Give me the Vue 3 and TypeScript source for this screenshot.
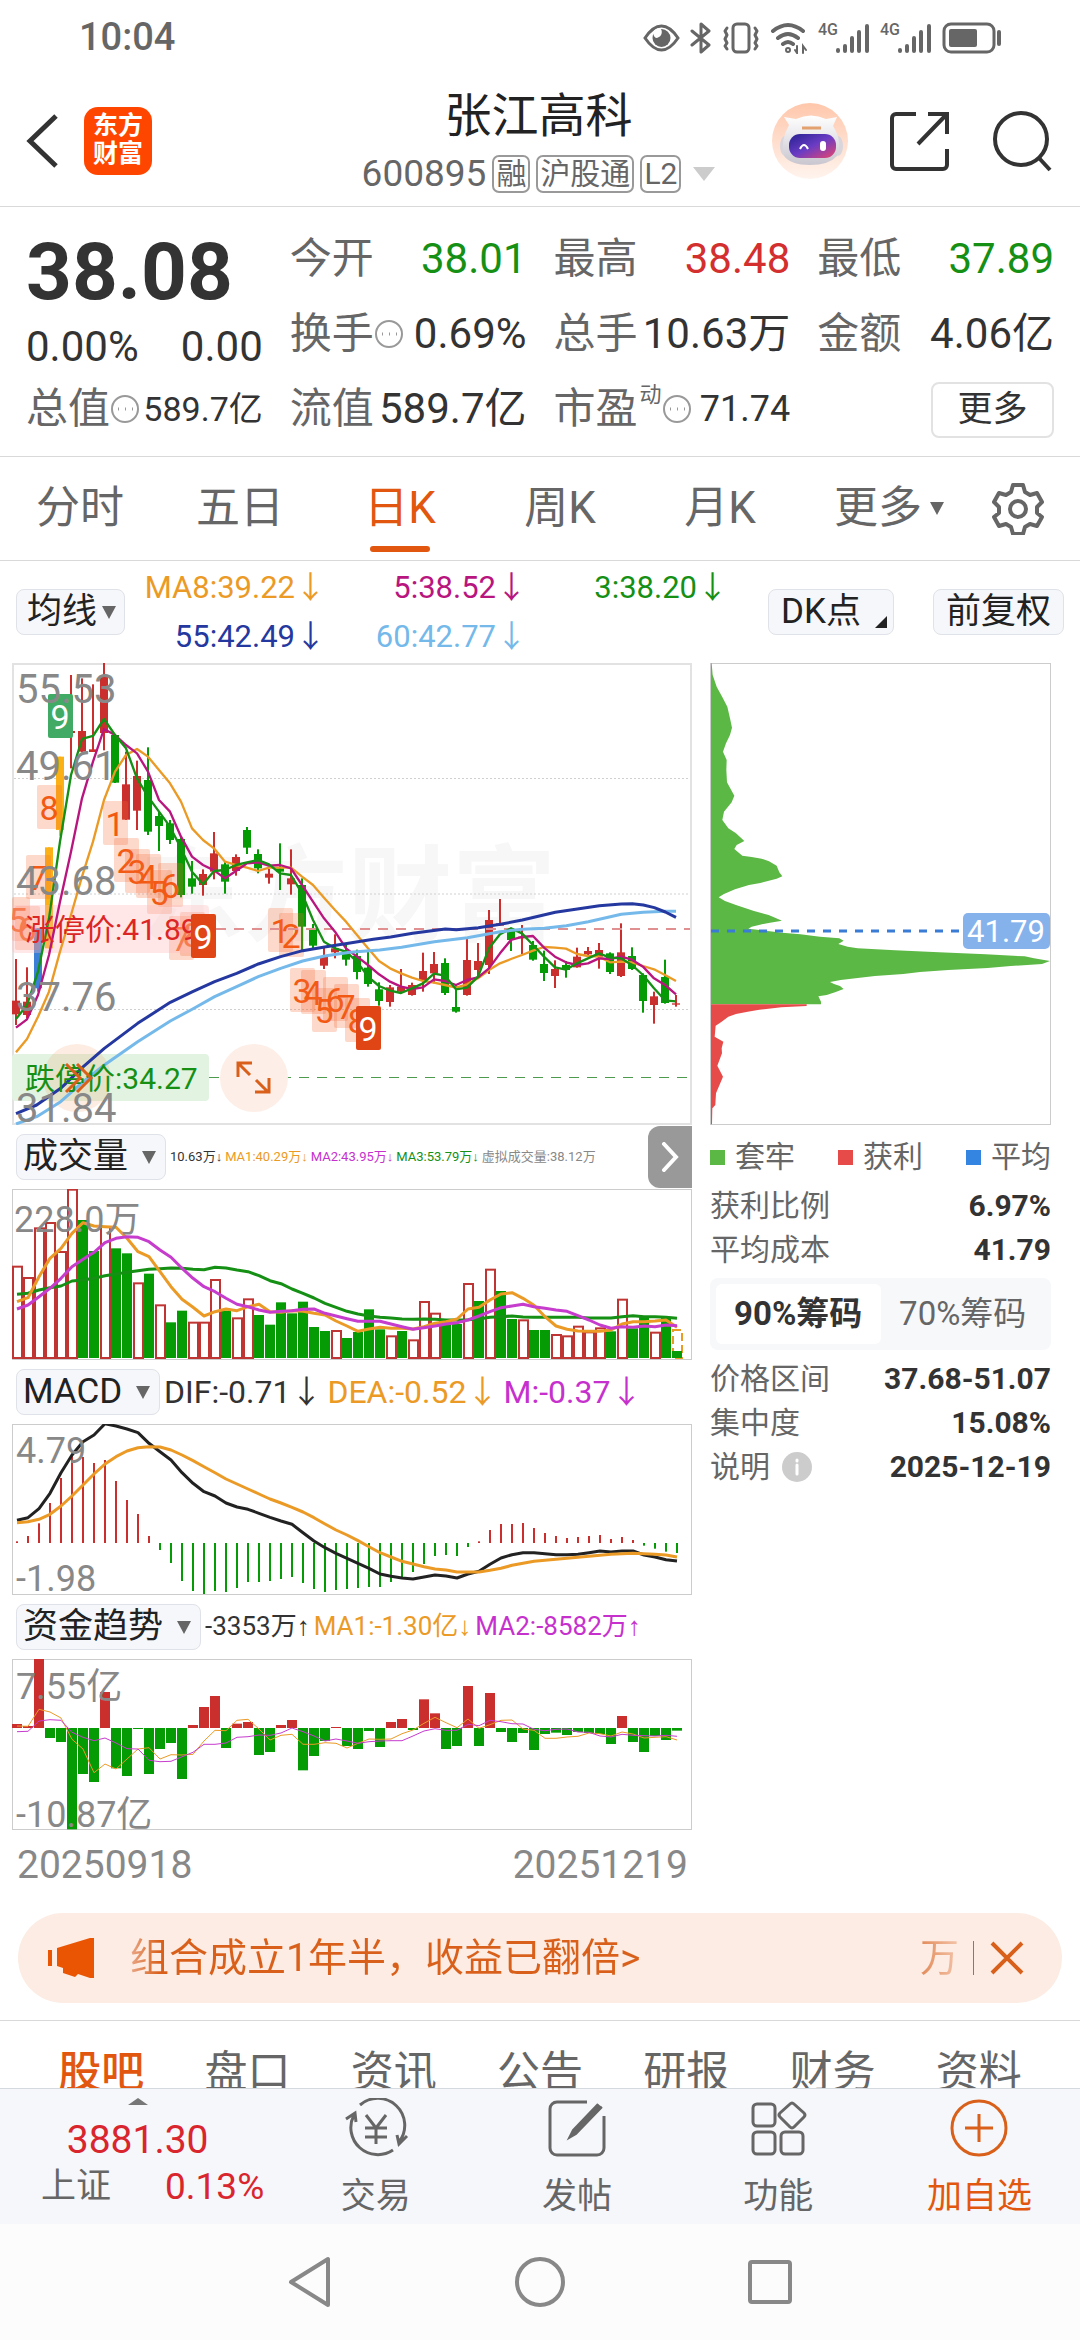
<script setup lang="ts">
import { ref } from 'vue'

type Pt = [number, number]

const period = ref('日K')
const periods = ['分时', '五日', '日K', '周K', '月K']
const chip = ref('90%')
const section = ref('股吧')
const sections = ['股吧', '盘口', '资讯', '公告', '研报', '财务', '资料']

const averages = [
  { text: 'MA8:39.22', color: '#eb9a26' },
  { text: '5:38.52', color: '#b9157f' },
  { text: '3:38.20', color: '#159015' },
  { text: '55:42.49', color: '#2438a0' },
  { text: '60:42.77', color: '#74b9ea' },
]

const RED = '#cb2f2d'
const GREEN = '#049b04'

/* Price chart: units are thirds of a pixel. high, open/close top, bottom, low, colour */
const candleRows: [number, number, number, number, string][] = [
  [912, 1037, 1078, 1110, 'r'], [937, 1040, 1080, 1090, 'r'], [820, 820, 1000, 1010, 'b'],
  [577, 577, 880, 880, 'y'], [305, 305, 525, 542, 'y'], [60, 228, 234, 340, 'r'],
  [70, 228, 290, 292, 'r'], [88, 283, 291, 291, 'r'], [24, 60, 234, 286, 'r'],
  [238, 240, 383, 384, 'g'], [290, 388, 494, 495, 'r'], [317, 363, 467, 525, 'r'],
  [277, 375, 530, 540, 'g'], [468, 483, 513, 588, 'g'], [495, 505, 555, 567, 'g'],
  [545, 552, 720, 727, 'g'], [618, 670, 695, 716, 'g'], [643, 657, 690, 722, 'r'],
  [531, 595, 650, 673, 'r'], [620, 628, 680, 716, 'g'], [598, 606, 648, 662, 'r'],
  [516, 525, 578, 597, 'g'], [583, 597, 640, 655, 'g'], [642, 656, 668, 686, 'r'],
  [565, 640, 650, 705, 'g'], [583, 670, 688, 719, 'r'], [670, 690, 815, 885, 'g'],
  [807, 820, 872, 885, 'g'], [873, 905, 932, 942, 'r'], [838, 880, 892, 910, 'r'],
  [865, 890, 914, 932, 'g'], [884, 903, 951, 973, 'g'], [890, 938, 987, 995, 'g'],
  [982, 1003, 1038, 1052, 'g'], [990, 997, 1041, 1055, 'r'], [942, 995, 1010, 1015, 'r'],
  [983, 990, 1020, 1022, 'r'], [893, 948, 975, 1010, 'r'], [891, 927, 955, 985, 'r'],
  [910, 924, 1014, 1020, 'g'], [990, 1056, 1070, 1073, 'g'], [850, 915, 1020, 1022, 'r'],
  [864, 918, 945, 965, 'r'], [765, 795, 930, 957, 'r'], [732, 805, 812, 812, 'r'],
  [818, 828, 855, 888, 'g'], [810, 845, 850, 897, 'r'], [858, 870, 914, 917, 'g'],
  [887, 927, 954, 978, 'g'], [916, 942, 963, 999, 'r'], [918, 930, 945, 968, 'g'],
  [878, 905, 937, 938, 'r'], [876, 888, 898, 905, 'r'], [864, 885, 905, 941, 'r'],
  [892, 895, 951, 957, 'g'], [805, 892, 963, 966, 'r'], [877, 903, 942, 945, 'g'],
  [955, 960, 1038, 1073, 'g'], [1010, 1024, 1050, 1106, 'r'], [914, 966, 1044, 1046, 'g'],
  [1020, 1045, 1049, 1055, 'r'],
]
const tint: Record<string, string> = { r: RED, g: GREEN, b: '#3b7fd6', y: '#fbb016' }
const candles = candleRows.map(([high, top, bottom, low, c], i) => ({
  x: 48 + 33 * i, high, top, h: bottom - top, low, fill: tint[c],
}))

const join = (pts: Pt[]) => pts.map((p) => p.join(',')).join(' ')
const everyBar = (ys: number[], x0: number, step: number) =>
  join(ys.map((y, i): Pt => [Math.round((x0 + step * i) * 10) / 10, y]))

const ma3 = everyBar([1092, 1050, 950, 790, 560, 360, 252, 243, 192, 240, 280, 370, 425, 470, 515, 580, 650, 688, 648, 645, 630, 622, 615, 628, 655, 660, 715, 795, 860, 880, 890, 920, 965, 993, 1007, 1014, 1000, 985, 956, 962, 1003, 998, 965, 880, 838, 820, 835, 870, 905, 937, 944, 925, 910, 895, 908, 910, 930, 960, 1000, 1036, 1039], 48, 33)
const ma5 = everyBar([1118, 1093, 1020, 900, 740, 590, 430, 320, 222, 240, 270, 295, 350, 435, 470, 545, 605, 630, 646, 670, 648, 625, 622, 632, 630, 640, 690, 740, 790, 830, 880, 905, 930, 958, 980, 995, 1002, 997, 973, 978, 990, 975, 967, 940, 895, 855, 846, 843, 878, 905, 922, 930, 925, 910, 912, 905, 914, 935, 970, 990, 1018], 48, 33)
const ma8 = everyBar([1192, 1152, 1085, 1010, 890, 780, 665, 560, 435, 350, 300, 282, 305, 345, 385, 440, 520, 555, 580, 620, 630, 638, 648, 638, 638, 638, 665, 690, 728, 765, 800, 840, 880, 918, 940, 955, 968, 978, 983, 990, 998, 988, 970, 945, 925, 912, 900, 887, 876, 878, 881, 897, 903, 905, 922, 920, 922, 933, 943, 960, 978], 48, 33)
const ma55 = join([[48, 1376], [110, 1350], [182, 1300], [250, 1235], [313, 1180], [413, 1105], [511, 1042], [578, 1010], [644, 980], [710, 955], [775, 927], [842, 905], [908, 887], [974, 876], [1050, 864], [1120, 853], [1172, 846], [1238, 835], [1336, 822], [1369, 824], [1435, 818], [1501, 808], [1567, 795], [1666, 772], [1732, 762], [1798, 752], [1864, 747], [1897, 746], [1930, 750], [1963, 758], [1996, 771], [2028, 787]])
const ma60 = join([[48, 1407], [110, 1385], [182, 1340], [250, 1280], [313, 1230], [413, 1160], [511, 1098], [578, 1062], [644, 1025], [710, 995], [775, 965], [842, 940], [908, 918], [974, 903], [1050, 892], [1139, 885], [1205, 877], [1303, 860], [1402, 848], [1501, 830], [1567, 823], [1633, 820], [1699, 812], [1765, 800], [1864, 778], [1930, 772], [1996, 769], [2028, 769]])

/* Sequence markers: text, centre x, top y, in pixels of the price chart */
const marks: [string, number, number, string][] = [
  ['8', 37, 122, ''], ['7', 26, 192, ''], ['5', 6, 234, ''], ['6', 15, 243, ''],
  ['1', 103, 138, ''], ['2', 114, 175, ''], ['3', 125, 186, ''], ['4', 136, 191, ''],
  ['5', 147, 207, ''], ['6', 158, 200, ''], ['7', 169, 253, ''], ['8', 180, 249, ''],
  ['1', 268, 245, ''], ['2', 279, 250, ''], ['3', 290, 305, ''], ['4', 301, 307, ''],
  ['5', 312, 325, ''], ['6', 323, 314, ''], ['7', 334, 321, ''], ['8', 345, 335, ''],
  ['9', 48, 31, '#41ab65'], ['9', 356, 343, '#e04516'],
]
const priceScale: [string, number][] = [
  ['55.53', 40], ['49.61', 117], ['43.68', 232], ['37.76', 348], ['31.84', 459],
]

/* Volume: bar top, R is a hollow rising day */
const volumeRows: [number, 'R' | 'G'][] = [
  [437, 'R'], [471, 'R'], [322, 'R'], [306, 'R'], [393, 'R'], [206, 'R'], [300, 'G'], [393, 'G'], [318, 'R'], [385, 'G'],
  [400, 'G'], [487, 'R'], [461, 'G'], [553, 'R'], [607, 'G'], [572, 'G'], [605, 'R'], [605, 'R'], [477, 'R'], [572, 'G'],
  [592, 'R'], [535, 'R'], [585, 'G'], [614, 'G'], [547, 'G'], [580, 'G'], [545, 'G'], [621, 'G'], [633, 'G'], [630, 'R'],
  [654, 'G'], [636, 'G'], [568, 'G'], [628, 'G'], [646, 'R'], [633, 'G'], [658, 'R'], [543, 'R'], [578, 'R'], [607, 'G'],
  [612, 'G'], [489, 'R'], [543, 'G'], [446, 'R'], [513, 'G'], [597, 'G'], [598, 'R'], [630, 'G'], [630, 'G'], [642, 'R'],
  [646, 'R'], [617, 'R'], [634, 'R'], [622, 'R'], [634, 'G'], [536, 'R'], [625, 'G'], [590, 'G'], [635, 'R'], [592, 'G'],
]
const barX = (i: number) => 5 + 11 * i
const third = (ys: number[], off: number) => ys.map((y) => Math.round((y / 3 - off) * 10) / 10)
const line = (ys: number[], off: number) => everyBar(third(ys, off), 5, 11)

const volumes = volumeRows.map(([top, c], i) => ({ x: barX(i), y: top / 3 - 69, up: c === 'R' }))
const vol1 = line([545, 533, 470, 415, 385, 340, 308, 318, 320, 322, 355, 395, 410, 455, 500, 538, 562, 588, 575, 567, 572, 560, 553, 575, 577, 572, 574, 580, 585, 603, 618, 634, 627, 622, 625, 625, 627, 620, 610, 605, 597, 567, 562, 540, 522, 518, 535, 556, 590, 618, 628, 633, 634, 634, 630, 612, 605, 605, 603, 600, 622], 69)
const vol2 = line([567, 555, 530, 505, 475, 440, 418, 397, 368, 355, 350, 352, 365, 390, 412, 445, 475, 500, 515, 535, 553, 560, 570, 577, 574, 572, 568, 567, 580, 588, 596, 604, 604, 604, 612, 620, 628, 623, 618, 612, 608, 600, 588, 575, 563, 558, 553, 560, 565, 570, 574, 587, 600, 615, 625, 620, 622, 618, 620, 615, 617], 69)
const vol3 = line([523, 520, 510, 503, 498, 483, 480, 475, 467, 462, 457, 452, 448, 446, 444, 445, 448, 449, 442, 444, 450, 455, 467, 482, 491, 507, 520, 534, 550, 562, 574, 582, 588, 592, 594, 597, 598, 597, 598, 600, 600, 599, 597, 592, 590, 588, 591, 592, 592, 592, 592, 592, 594, 594, 594, 590, 587, 590, 590, 592, 595], 69)

/* Bars that grow from a zero line, as a y span in pixels */
const zeroBars = (ys: number[], zero: number, off: number) =>
  ys.map((y, i) => ({
    x: barX(i),
    y: Math.min(y, zero) / 3 - off,
    h: Math.abs(y - zero) / 3,
    fill: y < zero ? RED : GREEN,
  }))
const macdBars = zeroBars([424, 408, 370, 309, 234, 165, 171, 189, 180, 243, 300, 342, 408, 450, 489, 543, 573, 582, 573, 576, 564, 546, 546, 543, 537, 531, 549, 567, 576, 570, 567, 564, 561, 561, 546, 533, 516, 492, 468, 465, 468, 441, 424, 390, 372, 372, 369, 384, 399, 408, 414, 411, 408, 405, 417, 411, 420, 437, 446, 455, 459], 429, 24)
const dif = line([361, 353, 326, 280, 218, 165, 125, 105, 71, 78, 87, 98, 130, 155, 180, 218, 250, 275, 288, 309, 321, 328, 340, 352, 363, 373, 398, 423, 443, 460, 475, 490, 505, 522, 529, 534, 537, 531, 525, 528, 534, 522, 514, 493, 474, 464, 458, 458, 461, 464, 464, 463, 458, 453, 456, 453, 453, 465, 471, 479, 483], 24)
const dea = line([368, 365, 358, 343, 318, 288, 255, 222, 192, 170, 153, 143, 140, 141, 150, 165, 182, 200, 218, 237, 252, 267, 282, 297, 309, 322, 336, 353, 372, 390, 405, 422, 440, 458, 471, 484, 492, 500, 507, 510, 516, 516, 516, 511, 505, 496, 490, 484, 481, 478, 475, 472, 469, 466, 463, 461, 460, 461, 463, 465, 471], 24)
const fundBars = zeroBars([252, 258, 54, 294, 306, 568, 402, 426, 156, 385, 408, 267, 402, 327, 309, 417, 255, 201, 168, 324, 251, 246, 345, 336, 255, 240, 391, 348, 303, 261, 318, 327, 273, 321, 246, 237, 270, 178, 220, 327, 318, 138, 318, 159, 276, 306, 279, 330, 282, 278, 285, 276, 279, 282, 312, 228, 306, 336, 288, 300, 272], 264, 19)
const fund1 = line([258, 259, 208, 216, 234, 298, 327, 398, 372, 387, 357, 327, 323, 357, 344, 345, 343, 303, 271, 272, 241, 238, 267, 300, 286, 283, 313, 313, 308, 310, 324, 310, 297, 298, 297, 281, 270, 250, 232, 248, 263, 237, 265, 254, 241, 240, 267, 271, 295, 295, 291, 289, 279, 281, 288, 276, 282, 294, 292, 290, 300], 19)
const fund2 = line([275, 274, 243, 239, 241, 277, 292, 302, 294, 309, 326, 327, 361, 365, 364, 350, 337, 313, 313, 309, 292, 290, 285, 286, 279, 264, 275, 288, 303, 297, 303, 310, 305, 303, 302, 302, 288, 273, 266, 271, 271, 253, 257, 241, 245, 251, 252, 268, 272, 268, 267, 276, 277, 288, 291, 283, 286, 287, 288, 286, 289], 19)

/* Chip distribution outlines, thirds of a pixel */
const trapped = join([[33, 25], [35, 25], [38, 60], [50, 95], [68, 128], [82, 155], [90, 190], [96, 218], [90, 240], [78, 265], [69, 290], [80, 315], [79, 345], [81, 382], [92, 402], [103, 422], [95, 442], [72, 470], [67, 495], [85, 520], [108, 535], [133, 558], [110, 570], [103, 582], [127, 602], [155, 606], [185, 611], [207, 619], [230, 632], [238, 652], [247, 664], [230, 671], [181, 684], [147, 690], [105, 703], [72, 717], [56, 727], [75, 738], [108, 750], [162, 768], [206, 780], [227, 789], [246, 797], [210, 803], [180, 809], [155, 815], [145, 821], [196, 827], [247, 833], [301, 838], [360, 845], [418, 850], [431, 857], [415, 867], [443, 875], [473, 880], [585, 886], [717, 892], [857, 898], [974, 904], [1002, 910], [1050, 918], [1026, 927], [932, 933], [863, 939], [745, 945], [660, 951], [610, 957], [525, 963], [473, 969], [422, 975], [390, 981], [402, 987], [420, 993], [431, 1002], [405, 1012], [380, 1020], [355, 1024], [363, 1040], [363, 1048], [33, 1048]])
const profit = join([[33, 1048], [320, 1048], [320, 1053], [244, 1057], [178, 1064], [143, 1070], [108, 1077], [85, 1085], [65, 1100], [47, 1112], [44, 1145], [70, 1160], [65, 1180], [66, 1195], [52, 1232], [69, 1265], [48, 1315], [46, 1350], [37, 1360], [36, 1408], [33, 1408]])
</script>

<template>
  <div class="page">
    <div class="status">
      <time>10:04</time>
      <div class="tray">
        <svg width="37" height="28" viewBox="0 0 37 28"><path d="M2 14C8 5 13 2 18.500 2S29 5 35 14C29 23 24 26 18.500 26S8 23 2 14Z" fill="none" stroke="#666" stroke-width="3" /><circle cx="18.500" cy="14" r="9" fill="#666" /><path d="M18 5a6 6 0 0 1-5 9a5 5 0 0 1 5-9Z" fill="#fff" /></svg>
        <svg width="22" height="34" viewBox="0 0 22 34"><path d="M2 10 19 24 11 31V3l8 7L2 24" fill="none" stroke="#666" stroke-width="3" stroke-linejoin="round" stroke-linecap="round" /></svg>
        <svg width="38" height="32" viewBox="0 0 38 32" fill="none" stroke="#666" stroke-width="3"><rect x="11" y="2" width="16" height="28" rx="4" /><path d="M5 6 3 9l2 4-2 4 2 4-2 3 2 3M33 6l2 3-2 4 2 4-2 4 2 3-2 3" stroke-linejoin="round" stroke-linecap="round" /></svg>
        <svg width="38" height="32" viewBox="0 0 38 32" fill="none" stroke="#666" stroke-width="4" stroke-linecap="round"><path d="M3 9Q18-3 33 9M8 16q10-8 20 0M13 22q5-4 10 0" /><circle cx="18" cy="28" r="1" /><path d="M27 24v7l-2-3M33 31v-7l3 4" stroke-width="2" /></svg>
        <span v-for="n in 2" :key="n" class="cell"><small>4G</small><svg width="34" height="32" viewBox="0 0 34 32" stroke="#666" stroke-width="4" stroke-linecap="round"><path d="M2 29v-1M9 29v-5M16 29V16M23 29V10M31 29V4" /></svg></span>
        <svg width="60" height="32" viewBox="0 0 60 32"><rect x="2" y="2" width="50" height="28" rx="7" fill="none" stroke="#666" stroke-width="3" /><rect x="7" y="7" width="28" height="18" rx="2" fill="#666" /><path d="M57 10v12" stroke="#666" stroke-width="4" stroke-linecap="round" /></svg>
      </div>
    </div>

    <header class="top">
      <div class="side">
        <button class="icon" aria-label="返回"><svg width="34" height="56" viewBox="0 0 34 56"><path d="M31 3 5 28l26 25" fill="none" stroke="#333" stroke-width="5" /></svg></button>
        <a class="logo" href="#">东方<br>财富</a>
      </div>
      <div class="title">
        <h1>张江高科</h1>
        <p><span>600895</span><b>融</b><b>沪股通</b><b>L2</b><i class="tri pale"></i></p>
      </div>
      <div class="side right">
        <button class="icon" aria-label="助手">
          <svg width="76" height="76" viewBox="0 0 76 76">
            <defs>
              <linearGradient id="halo" x1="0" y1="0" x2="0" y2="1"><stop offset="0" stop-color="#ffc7ab" /><stop offset="1" stop-color="#fff4ee" /></linearGradient>
              <linearGradient id="visor" x1="0" y1="0" x2="1" y2="1"><stop offset="0" stop-color="#25208f" /><stop offset=".5" stop-color="#6a3cc4" /><stop offset="1" stop-color="#e8456e" /></linearGradient>
              <linearGradient id="shell" x1="0" y1="0" x2="0" y2="1"><stop offset="0" stop-color="#fff" /><stop offset="1" stop-color="#c9c6cf" /></linearGradient>
            </defs>
            <circle cx="38" cy="38" r="38" fill="url(#halo)" />
            <ellipse cx="13" cy="43" rx="5" ry="10" fill="#d9d5dc" /><ellipse cx="66" cy="43" rx="5" ry="10" fill="#d9d5dc" />
            <path d="M17 22 12 14l12 2q15-7 30 0l11-2-4 9q10 16 4 30-8 9-27 9t-26-9Q8 38 17 22Z" fill="url(#shell)" />
            <rect x="17" y="31" width="47" height="24" rx="11" fill="url(#visor)" />
            <path d="M30 25h19" stroke="#e2a16f" stroke-width="3" />
            <path d="M28 46q4-8 8 0" fill="none" stroke="#fff" stroke-width="2" /><rect x="48" y="38" width="6" height="10" rx="3" fill="#fff" />
          </svg>
        </button>
        <button class="icon" aria-label="分享"><svg width="60" height="60" viewBox="0 0 60 60" fill="none" stroke="#333" stroke-width="4"><path d="M26 3H6a4 4 0 0 0-4 4v47a4 4 0 0 0 4 4h47a4 4 0 0 0 4-4V38M38 3h19v20M56 4 28 33" /></svg></button>
        <button class="icon" aria-label="搜索"><svg width="60" height="62" viewBox="0 0 60 62" fill="none" stroke="#333" stroke-width="4"><circle cx="29" cy="29" r="26" /><path d="M47 48l11 12" /></svg></button>
      </div>
    </header>

    <section class="quote">
      <div class="col">
        <strong class="price">38.08</strong>
        <div class="cellrow chg"><span>0.00%</span><span>0.00</span></div>
        <div class="cellrow"><span class="name">总值<svg class="dots" viewBox="0 0 30 30"><circle cx="15" cy="15" r="13" /><path d="M8 15h1M15 15h1M22 15h1" /></svg></span><span class="small">589.7亿</span></div>
      </div>
      <div class="col">
        <div class="cellrow"><span class="name">今开</span><span class="down">38.01</span></div>
        <div class="cellrow"><span class="name">换手<svg class="dots" viewBox="0 0 30 30"><circle cx="15" cy="15" r="13" /><path d="M8 15h1M15 15h1M22 15h1" /></svg></span><span>0.69%</span></div>
        <div class="cellrow"><span class="name">流值</span><span>589.7亿</span></div>
      </div>
      <div class="col">
        <div class="cellrow"><span class="name">最高</span><span class="up">38.48</span></div>
        <div class="cellrow"><span class="name">总手</span><span>10.63万</span></div>
        <div class="cellrow"><span class="name">市盈<sup>动</sup><svg class="dots" viewBox="0 0 30 30"><circle cx="15" cy="15" r="13" /><path d="M8 15h1M15 15h1M22 15h1" /></svg></span><span class="mid">71.74</span></div>
      </div>
      <div class="col">
        <div class="cellrow"><span class="name">最低</span><span class="down">37.89</span></div>
        <div class="cellrow"><span class="name">金额</span><span>4.06亿</span></div>
        <div class="cellrow end"><button class="more">更多</button></div>
      </div>
    </section>

    <nav class="periods">
      <button v-for="p in periods" :key="p" :class="{ on: p === period }" @click="period = p">{{ p }}</button>
      <button class="wide">更多<i class="tri"></i></button>
      <button class="gear" aria-label="设置"><svg width="52" height="52" viewBox="0 0 52 52" fill="none" stroke="#666" stroke-width="4" stroke-linejoin="round"><path d="M21 2h10l2 7 5 3 7-2 5 9-5 5v6l5 4-5 9-7-2-5 3-2 7H21l-2-7-5-3-7 2-5-9 5-4v-6l-5-5 5-9 7 2 5-3Z" /><circle cx="26" cy="26" r="8" /></svg></button>
    </nav>

    <div class="mabar">
      <div class="pick tight"><select aria-label="均线"><option>均线</option></select><i class="tri"></i></div>
      <ul class="averages">
        <li v-for="a in averages" :key="a.text" :style="{ color: a.color }">{{ a.text }}<i>↓</i></li>
      </ul>
      <button class="tool dk">DK点<i class="corner"></i></button>
      <button class="tool">前复权</button>
    </div>

    <main class="charts">
      <div class="left">
        <svg viewBox="0 0 680 462">
          <rect x="1" y="1" width="678" height="460" fill="#fff" stroke="#e2e2e2" stroke-width="2" />
          <text x="128" y="270" class="mark">东方财富</text>
          <path d="M2 115.500H678M2 231H678M2 346.500H678" stroke="#d0d0d0" stroke-dasharray="2 2" />
          <g transform="translate(-12 -8) scale(.33333)" fill="none">
            <g v-for="c in candles" :key="c.x" :fill="c.fill">
              <rect :x="c.x - 3" :y="c.high" width="6" :height="c.low - c.high" />
              <rect :x="c.x - 12" :y="c.top" width="24" :height="c.h" />
            </g>
          </g>
          <g v-for="(m, i) in marks" :key="i">
            <rect :x="Math.max(0, m[1] - 12)" :y="m[2]" :width="m[1] < 12 ? m[1] + 12 : 25" height="44" :rx="2" :fill="m[3] || '#f4672e'" :fill-opacity="m[3] ? 1 : 0.25" />
            <text :x="m[1]" :y="m[2] + 35" class="digit" :fill="m[3] ? '#fff' : '#f25a14'">{{ m[0] }}</text>
          </g>
          <rect x="0" y="242" width="197" height="48" rx="4" fill="#ffb9b9" fill-opacity=".35" />
          <path d="M204 266H678" stroke="#e09090" stroke-width="2" stroke-dasharray="10 8" />
          <rect x="0" y="391" width="197" height="47" rx="4" fill="#e2f3e2" />
          <path d="M197 414.500H678" stroke="#4c9a4c" stroke-dasharray="10 8" />
          <circle cx="65" cy="415" r="34" fill="#f5874c" fill-opacity=".16" />
          <circle cx="242" cy="415" r="34" fill="#fdeee7" />
          <g transform="translate(-12 -8) scale(.33333)" fill="none" stroke-width="7" stroke-linejoin="round">
            <polyline :points="ma8" stroke="#eb9a26" />
            <polyline :points="ma5" stroke="#b9157f" />
            <polyline :points="ma3" stroke="#159015" />
            <polyline :points="ma60" stroke="#74b9ea" stroke-width="9" />
            <polyline :points="ma55" stroke="#2438a0" stroke-width="9" />
          </g>
          <text x="13" y="277" class="limit" fill="#dc2626">涨停价:41.89</text>
          <rect x="179" y="251" width="25" height="44" rx="2" fill="#e04516" />
          <text x="191" y="286" class="digit" fill="#fff">9</text>
          <text x="13" y="426" class="limit" fill="#159015">跌停价:34.27</text>
          <path d="M54 401l14 14-14 14M65 401l14 14-14 14" fill="none" stroke="#d9601a" stroke-width="3" />
          <path d="M238 412l-12-12M226 414v-14h14M244 417l12 12M257 415v14h-14" fill="none" stroke="#d9601a" stroke-width="3" />
          <text v-for="s in priceScale" :key="s[0]" x="4" :y="s[1]" class="scale big">{{ s[0] }}</text>
        </svg>

        <div class="indicator">
          <div class="pick"><select aria-label="指标一"><option>成交量</option></select><i class="tri"></i></div>
          <p class="tiny"><span>10.63万<i class="arrow">↓</i></span><span class="c1">MA1:40.29万<i class="arrow">↓</i></span><span class="c2">MA2:43.95万<i class="arrow">↓</i></span><span class="c3">MA3:53.79万<i class="arrow">↓</i></span><span class="c4">虚拟成交量:38.12万</span></p>
          <button class="fold" aria-label="展开"><svg width="18" height="30" viewBox="0 0 18 30"><path d="M3 2l12 13L3 28" fill="none" stroke="#fff" stroke-width="4" stroke-linecap="round" /></svg></button>
        </div>
        <svg viewBox="0 0 680 171">
          <rect x=".5" y=".5" width="679" height="170" fill="#fff" stroke="#ccc" />
          <template v-for="v in volumes" :key="v.x">
            <rect v-if="v.up" :x="v.x - 4" :y="v.y + 1" width="9" :height="168 - v.y" fill="#fff" stroke="#bf3533" stroke-width="2" />
            <rect v-else :x="v.x - 5" :y="v.y" width="10" :height="169 - v.y" :fill="GREEN" />
          </template>
          <rect x="661" y="141" width="9" height="28" fill="none" stroke="#eb9a26" stroke-width="2" stroke-dasharray="8 4" />
          <rect x="660" y="162" width="10" height="7" :fill="GREEN" />
          <g fill="none" stroke-width="3" stroke-linejoin="round">
            <polyline :points="vol3" stroke="#159015" /><polyline :points="vol1" stroke="#eb9a26" /><polyline :points="vol2" stroke="#c63ccd" />
          </g>
          <text x="2" y="43" class="scale">228.0万</text>
        </svg>

        <div class="indicator">
          <div class="pick"><select aria-label="指标二"><option>MACD</option></select><i class="tri"></i></div>
          <p class="large"><span>DIF:-0.71<i>↓</i></span><span class="c1">DEA:-0.52<i>↓</i></span><span class="c2">M:-0.37<i>↓</i></span></p>
        </div>
        <svg viewBox="0 0 680 171">
          <rect x=".5" y=".5" width="679" height="170" fill="#fff" stroke="#ccc" />
          <rect v-for="b in macdBars" :key="b.x" :x="b.x - 1" :y="b.y" width="2" :height="b.h" :fill="b.fill" />
          <g fill="none" stroke-width="3" stroke-linejoin="round">
            <polyline :points="dif" stroke="#222" /><polyline :points="dea" stroke="#eb9a26" />
          </g>
          <text x="4" y="39" class="scale">4.79</text>
          <text x="4" y="167" class="scale">-1.98</text>
        </svg>

        <div class="indicator">
          <div class="pick"><select aria-label="指标三"><option>资金趋势</option></select><i class="tri"></i></div>
          <p class="medium"><span>-3353万<i class="arrow">↑</i></span><span class="c1">MA1:-1.30亿<i class="arrow">↓</i></span><span class="c2">MA2:-8582万<i class="arrow">↑</i></span></p>
        </div>
        <svg viewBox="0 0 680 171">
          <rect x=".5" y=".5" width="679" height="170" fill="#fff" stroke="#ccc" />
          <rect v-for="b in fundBars" :key="b.x" :x="b.x - 5" :y="b.y" width="10" :height="b.h" :fill="b.fill" />
          <g fill="none" stroke-linejoin="round">
            <polyline :points="fund1" stroke="#eb9a26" /><polyline :points="fund2" stroke="#c63ccd" />
          </g>
          <text x="4" y="40" class="scale">7.55亿</text>
          <text x="4" y="168" class="scale">-10.87亿</text>
        </svg>
        <div class="dates"><time>20250918</time><time>20251219</time></div>
      </div>

      <aside class="chips">
        <svg viewBox="0 0 341 462">
          <rect x=".5" y=".5" width="340" height="461" fill="#fff" stroke="#ccc" />
          <g transform="translate(-10 -8) scale(.33333)">
            <polygon :points="trapped" fill="#5cb845" /><polygon :points="profit" fill="#e64a49" />
            <path d="M33 828H780" stroke="#3a7bd5" stroke-width="9" stroke-dasharray="24 24" />
          </g>
          <rect x="253" y="250" width="87" height="36" rx="5" fill="#86b2ec" />
          <text x="296" y="279" class="avg">41.79</text>
        </svg>
        <ul class="legend"><li><i class="sw a"></i>套牢</li><li><i class="sw b"></i>获利</li><li><i class="sw c"></i>平均</li></ul>
        <dl>
          <div><dt>获利比例</dt><dd>6.97%</dd></div>
          <div><dt>平均成本</dt><dd>41.79</dd></div>
        </dl>
        <div class="seg">
          <button :class="{ on: chip === '90%' }" @click="chip = '90%'">90%筹码</button>
          <button :class="{ on: chip === '70%' }" @click="chip = '70%'">70%筹码</button>
        </div>
        <dl>
          <div><dt>价格区间</dt><dd>37.68-51.07</dd></div>
          <div><dt>集中度</dt><dd>15.08%</dd></div>
          <div><dt>说明<svg width="30" height="30" viewBox="0 0 30 30"><circle cx="15" cy="15" r="15" fill="#ccc" /><path d="M15 13v9M15 8v1" stroke="#fff" stroke-width="3" stroke-linecap="round" /></svg></dt><dd>2025-12-19</dd></div>
        </dl>
      </aside>
    </main>

    <div class="notice">
      <svg width="48" height="42" viewBox="0 0 48 42" fill="#ea5504"><path d="M0 13h4v16H0ZM9 11 42 1h4v40h-4l-12-4-3 3-12-4v-5l-6-2Z" /></svg>
      <a href="#">组合成立1年半，收益已翻倍&gt;</a>
      <span class="next">万</span>
      <button class="icon" aria-label="关闭"><svg width="34" height="34" viewBox="0 0 34 34"><path d="M2 2l30 30M32 2 2 32" stroke="#d9601a" stroke-width="4" /></svg></button>
    </div>

    <nav class="sections">
      <button v-for="s in sections" :key="s" :class="{ on: s === section }" @click="section = s">{{ s }}</button>
    </nav>

    <footer class="dock">
      <a class="index" href="#"><i class="caret"></i><strong>3881.30</strong><span><em>上证</em><b>0.13%</b></span></a>
      <button><svg width="66" height="60" viewBox="0 0 66 60" fill="none" stroke="#666" stroke-width="3"><path d="M17 7a27 27 0 0 1 39 37M50 52A27 27 0 0 1 11 17M3 21l9-6 1 9M64 38l-8 8-2-9M23 17l10 13 10-13M33 30v16M22 30h22M22 39h22" /></svg>交易</button>
      <button><svg width="66" height="60" viewBox="0 0 66 60" fill="none" stroke="#666" stroke-width="3"><path d="M43 4H13a7 7 0 0 0-7 7v39a7 7 0 0 0 7 7h40a7 7 0 0 0 7-7V18" /><path d="M54 6 29 32l-4 8 7-4 26-27" fill="#666" stroke-width="2" /></svg>发帖</button>
      <button><svg width="66" height="60" viewBox="0 0 66 60" fill="none" stroke="#666" stroke-width="3"><rect x="8" y="6" width="22" height="22" rx="4" /><rect x="8" y="34" width="22" height="22" rx="4" /><rect x="36" y="34" width="22" height="22" rx="4" /><path d="M45 6q2-2 4 0l10 9q2 2 0 4l-10 10q-2 2-4 0L35 19q-2-2 0-4Z" /></svg>功能</button>
      <button class="add"><svg width="66" height="60" viewBox="0 0 66 60" fill="none" stroke="#d9601a" stroke-width="3"><circle cx="33" cy="30" r="27" /><path d="M33 16v28M19 30h28" /></svg>加自选</button>
    </footer>

    <div class="system">
      <button class="icon" aria-label="后退"><svg width="48" height="54" viewBox="0 0 48 54"><path d="M42 4v46L5 27Z" fill="none" stroke="#888" stroke-width="4" stroke-linejoin="round" /></svg></button>
      <button class="icon" aria-label="主屏幕"><svg width="52" height="52" viewBox="0 0 52 52"><circle cx="26" cy="26" r="23" fill="none" stroke="#888" stroke-width="4" /></svg></button>
      <button class="icon" aria-label="最近任务"><svg width="48" height="48" viewBox="0 0 48 48"><rect x="4" y="4" width="40" height="40" rx="2" fill="none" stroke="#888" stroke-width="4" /></svg></button>
    </div>
  </div>
</template>

<style>
body { background: #fff; }
</style>

<style scoped>
* { box-sizing: border-box; }
.page { font-family: Roboto, "Noto Sans CJK SC", sans-serif; line-height: 1.2; color: #333; background: #fff; overflow: hidden; }
button, select { font-family: inherit; line-height: inherit; color: inherit; background: none; border: 0; padding: 0; margin: 0; }
a { color: inherit; text-decoration: none; }
svg { display: block; flex: none; }
ul, dl, dd, p, h1 { margin: 0; padding: 0; list-style: none; }
i, em { font-style: normal; }
.icon { display: flex; }
.tri { width: 0; height: 0; border: 7px solid transparent; border-top: 13px solid #666; border-bottom: 0; flex: none; }
.tri.pale { border-width: 14px 11px 0; border-top-color: #ccc; }
.arrow { font-family: "Liberation Sans", sans-serif; }

.status { height: 76px; padding: 0 78px 0 79px; display: flex; justify-content: space-between; align-items: center; color: #666; }
.status time { font-size: 38px; font-weight: 500; }
.tray { display: flex; align-items: center; gap: 10px; height: 36px; }
.cell { display: flex; align-items: flex-start; }
.cell small { font-size: 16px; line-height: 16px; font-weight: 500; width: 18px; }

.top { height: 131px; border-bottom: 1px solid #d9d9d9; display: grid; grid-template-columns: 1fr auto 1fr; align-items: center; padding: 0 28px 0 25px; }
.side { display: flex; align-items: center; gap: 25px; }
.side.right { justify-content: flex-end; gap: 42px; }
.logo { width: 68px; height: 68px; border-radius: 14px; background: #ff4600; color: #fff; font-size: 25px; line-height: 28px; font-weight: 700; text-align: center; padding-top: 5px; }
.title { text-align: center; }
.title h1 { font-size: 47px; line-height: 60px; font-weight: 400; color: #222; }
.title p { display: flex; align-items: center; justify-content: center; gap: 6px; margin-top: 6px; height: 44px; color: #666; }
.title p span { font-size: 37px; }
.title p b { font-size: 30px; line-height: 34px; font-weight: 400; border: 2px solid #999; border-radius: 7px; padding: 0 2px; }
.title p .tri { margin-left: 6px; }

.quote { display: grid; grid-template-columns: repeat(4, 1fr); gap: 27px; padding: 15px 26px 9px; border-bottom: 1px solid #d9d9d9; }
.cellrow { height: 75px; display: flex; align-items: center; justify-content: space-between; font-size: 42px; white-space: nowrap; }
.cellrow .name { color: #666; display: flex; align-items: center; }
.cellrow sup { font-size: 22px; line-height: 22px; align-self: flex-start; margin-left: 2px; }
.cellrow .small { font-size: 34px; }
.cellrow .mid { font-size: 36px; }
.cellrow.end { justify-content: flex-end; }
.price { display: block; height: 100px; font-size: 80px; line-height: 100px; font-weight: 700; }
.chg { height: 50px; }
.down { color: #159015; }
.up { color: #d32f2f; }
.dots { width: 30px; height: 30px; fill: none; stroke: #999; stroke-width: 2; }
.dots path { stroke-width: 3; }
.more { width: 123px; height: 56px; font-size: 35px; border: 2px solid #e2e2e2; border-radius: 8px; }

.periods { display: flex; height: 104px; padding-right: 22px; border-bottom: 1px solid #d9d9d9; }
.periods button { flex: 160 1 0; font-size: 44px; color: #666; display: flex; align-items: center; justify-content: center; position: relative; }
.periods .wide { flex-grow: 178; gap: 8px; }
.periods .gear { flex-grow: 80; }
.periods .on { color: #e2570f; }
.periods .on::after { content: ""; position: absolute; left: 50%; bottom: 8px; width: 60px; height: 6px; margin-left: -30px; border-radius: 3px; background: #e2570f; }

.mabar { display: flex; align-items: center; height: 102px; padding: 0 16px; }
.pick { position: relative; display: flex; align-items: center; flex: none; }
.pick select { appearance: none; height: 46px; padding: 0 36px 0 6px; font-size: 35px; line-height: 42px; color: #222; background: #f6f7fa; border: 1px solid #dfe2e8; border-radius: 8px; }
.pick .tri { position: absolute; right: 10px; top: 17px; pointer-events: none; }
.pick.tight select { padding: 0 26px 0 10px; }
.pick.tight .tri { right: 9px; }
.averages { flex: 1; display: grid; grid-template-columns: repeat(3, 1fr); font-size: 31px; line-height: 49px; text-align: right; margin-right: 40px; white-space: nowrap; }
.tool { height: 46px; border: 1px solid #dfe2e8; border-radius: 8px; background: #f6f7fa; font-size: 35px; line-height: 42px; padding: 0 12px; color: #222; display: flex; align-items: center; flex: none; }
.tool.dk { margin-right: 39px; padding-right: 6px; gap: 14px; }
.corner { border: 6px solid transparent; border-right-color: #222; border-bottom-color: #222; align-self: flex-end; margin-bottom: 6px; }

.charts { display: grid; grid-template-columns: 680fr 341fr; gap: 18px; padding: 0 29px 0 12px; align-items: start; }
.charts > * { min-width: 0; }
.left > svg, .chips > svg { width: 100%; height: auto; }
.scale { font-size: 36px; fill: #888; }
.scale.big { font-size: 40px; }
.mark { font-size: 104px; font-weight: 700; fill: #f7f7f7; }
.digit { font-size: 34px; text-anchor: middle; }
.limit { font-size: 30px; }
.avg { font-size: 31px; fill: #fff; text-anchor: middle; }

.indicator { height: 64px; display: flex; align-items: center; padding-left: 4px; white-space: nowrap; }
.indicator p { display: flex; flex: 1; margin-left: 4px; }
.tiny { font-size: 13px; gap: 3px; }
.large { font-size: 32px; gap: 5px; }
.medium { font-size: 26px; gap: 4px; }
.c1 { color: #eb9a26; }
.c2 { color: #c631cd; }
.c3 { color: #159015; }
.c4 { color: #888; }
.fold { width: 44px; height: 62px; background: #999; border-radius: 12px 0 0 12px; display: flex; align-items: center; justify-content: center; }
.dates { display: flex; justify-content: space-between; padding: 12px 4px 0 5px; font-size: 39px; line-height: 46px; color: #888; }

.legend { display: flex; justify-content: space-between; height: 64px; align-items: center; font-size: 30px; color: #666; }
.legend li { display: flex; align-items: center; gap: 10px; }
.sw { width: 15px; height: 15px; }
.sw.a { background: #5cb845; }
.sw.b { background: #e64a49; }
.sw.c { background: #3484e2; }
.chips dl { margin: -5px 0 6px; }
.chips dl div { display: flex; justify-content: space-between; align-items: center; height: 44px; font-size: 30px; }
.chips dt { color: #666; display: flex; align-items: center; gap: 12px; }
.chips dd { font-weight: 700; }
.seg { display: flex; height: 72px; padding: 6px; background: #f7f8fa; border-radius: 8px; }
.seg + dl { margin-top: 7px; }
.seg button { flex: 1; font-size: 33px; color: #666; border-radius: 6px; white-space: nowrap; }
.seg .on { background: #fff; color: #333; font-weight: 700; }

.notice { margin: 25px 18px 17px; height: 90px; border-radius: 45px; background: #fcece3; display: flex; align-items: center; padding: 0 38px 0 30px; color: #d9601a; font-size: 39px; }
.notice a { flex: 1; margin-left: 34px; background: linear-gradient(90deg, #e9a887, #d9601a 30px); background-clip: text; color: transparent; }
.next { background: linear-gradient(90deg, #e28a58, #f9d9c8); background-clip: text; color: transparent; padding-right: 14px; }
.notice .icon { border-left: 1px solid #d9601a; padding-left: 16px; }

.sections { height: 68px; overflow: hidden; border-top: 1px solid #d9d9d9; display: flex; padding: 0 28px; }
.sections button { flex: 1; height: 104px; font-size: 43px; color: #666; }
.sections .on { color: #e2570f; font-weight: 500; }

.dock { height: 136px; background: #f6f7fa; border-top: 1px solid #d3d9de; display: flex; }
.dock button { flex: 201 1 0; font-size: 35px; line-height: 48px; color: #666; display: flex; flex-direction: column; align-items: center; padding-top: 9px; gap: 15px; }
.dock .add { color: #e2570f; }
.index { flex: 275 1 0; display: flex; flex-direction: column; align-items: center; color: #d9262e; padding-top: 9px; }
.caret { border: 10px solid transparent; border-top: 0; border-bottom: 7px solid #777; }
.index strong { font-size: 39px; line-height: 46px; font-weight: 400; margin-top: 12px; }
.index span { display: flex; width: 100%; justify-content: space-between; padding: 0 11px 0 41px; font-size: 35px; line-height: 48px; }
.index em { color: #666; }
.index b { font-weight: 400; font-size: 37px; }

.system { height: 116px; background: #fcfcfc; display: flex; align-items: center; padding: 0 195px; }
.system .icon { flex: 1; justify-content: center; }
</style>
